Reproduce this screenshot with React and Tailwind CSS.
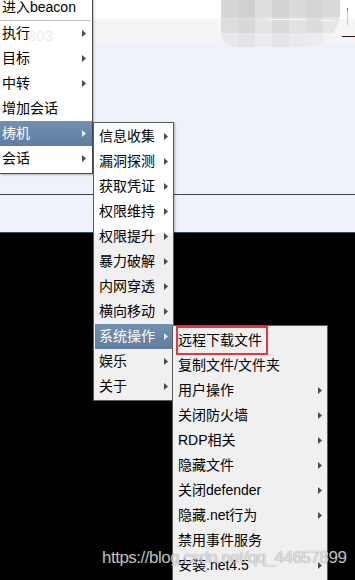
import React from 'react'

const font = { fontFamily: '"Liberation Sans", "Noto Sans CJK SC", sans-serif' }

// small right-pointing triangle used for submenu arrows
const Arrow = ({ light }) => (
    <svg width="4" height="7" viewBox="0 0 4 7" className="shrink-0">
        <polygon points="0,0 4,3.5 0,7" fill={light ? '#e8edf3' : '#4a4a4a'} />
    </svg>
)

const Item = ({ label, arrow, active, pad }) => (
    <div
        className={`h-[25px] leading-[25px] flex items-center justify-between text-[14px] whitespace-nowrap ${pad} ${
            active ? 'bg-[linear-gradient(to_bottom,#7290b0,#5f7d9e)] text-white' : 'text-black'
        }`}
    >
        <span>{label}</span>
        {arrow && <Arrow light={active} />}
    </div>
)

const mainItems = [
    { label: '执行', arrow: true },
    { label: '目标', arrow: true },
    { label: '中转', arrow: true },
    { label: '增加会话' },
    { label: '梼机', arrow: true, active: true },
    { label: '会话', arrow: true },
]

const subItems = [
    '信息收集', '漏洞探测', '获取凭证', '权限维持', '权限提升', '暴力破解',
    '内网穿透', '横向移动', '系统操作', '娱乐', '关于',
]

const sysItems = [
    { label: '远程下载文件' },
    { label: '复制文件/文件夹' },
    { label: '用户操作', arrow: true },
    { label: '关闭防火墙', arrow: true },
    { label: 'RDP相关', arrow: true },
    { label: '隐藏文件', arrow: true },
    { label: '关闭defender', arrow: true },
    { label: '隐藏.net行为', arrow: true },
    { label: '禁用事件服务' },
    { label: '安装.net4.5', arrow: true },
]

const mosaic = [
    ['#d6d6d6', '#d0d0d0', '#dedede', '#d2d2d2', '#dadada', '#d4d4d4', '#d9d9d9'],
    ['#dddddd', '#d8d8d8', '#e4e4e4', '#dadada', '#e2e2e2', '#dcdcdc', '#e6e6e6'],
    ['#e8e8ec', '#e3e3e8', '#ebebef', '#e4e4ea', '#e9e9ee', '#ececf0', '#eff2fa'],
]

export default function App() {
    return (
        <div className="relative w-[355px] h-[580px] overflow-hidden bg-black" style={font}>
            {/* backdrop */}
            <div className="flex flex-col">
                <div className="h-[19px] bg-white" />
                <div className="h-[23px] bg-[#f5f5f5]" />
                <div className="h-[152px] bg-[#eff2fa]" />
                <div className="h-px bg-[#444]" />
                <div className="h-[37px] bg-[#eff2fa]" />
                <div className="h-px bg-[#2f4d6c]" />
            </div>

            {/* blurred mosaic */}
            <div className="absolute left-[221px] top-0 w-[119px] h-[47px] rounded-bl-[14px] rounded-br-[34px] overflow-hidden grid grid-cols-7 grid-rows-[17px_16px_14px]">
                {mosaic.flat().map((c, i) => (
                    <div key={i} style={{ background: c }} />
                ))}
            </div>
            <div className="absolute left-[267px] top-[19px] w-[40px] h-px bg-white/80" />
            <div className="absolute left-[320px] top-[20px] w-[14px] h-px bg-white/80" />

            {/* right edge fragments */}
            <div className="absolute left-[347px] top-[8px] w-px h-[17px] bg-[#c8c8c8]" />
            <div className="absolute left-[347px] top-[8px] w-px h-[2px] bg-[#2a7ad0]" />
            <div className="absolute left-[342px] top-[36px] w-[13px] h-px bg-[#3a1010]" />

            {/* main menu */}
            <div className="absolute left-0 top-[-5px] w-[93px] bg-white border-r border-b border-[#4a4a4a] pb-[2px] shadow-[1px_1px_2px_rgba(0,0,0,0.25)]">
                <Item label="进入beacon" pad="pl-[2px] pr-[6px]" />
                <div className="h-px bg-[#bdbdbd] mr-[2px]" />
                {mainItems.map((it) => (
                    <Item key={it.label} {...it} pad="pl-[2px] pr-[6px]" />
                ))}
                <div className="absolute left-[28px] top-[30px] text-[15px] text-[#ececec] pointer-events-none">303</div>
            </div>

            {/* second level */}
            <div className="absolute left-[93px] top-[122px] w-[81px] border border-[#5a5a5a] py-[1px] px-[1px] bg-[linear-gradient(to_bottom,#ffffff_110px,#f0f0f0_110px)] shadow-[1px_1px_2px_rgba(0,0,0,0.3)]">
                {subItems.map((s) => (
                    <Item key={s} label={s} arrow active={s === '系统操作'} pad="pl-[4px] pr-[4px]" />
                ))}
            </div>

            {/* third level */}
            <div className="absolute left-[172px] top-[325px] w-[156px] h-[270px] border border-[#5a5a5a] pt-[2px] bg-[#f0f0f0]">
                {sysItems.map((it, i) => (
                    <div key={it.label} className="relative">
                        <Item {...it} pad="pl-[5px] pr-[5px]" />
                        {i === 0 && (
                            <div className="absolute left-[3px] top-[-2px] w-[92px] h-[29px] border-2 border-[#e8363a]" />
                        )}
                    </div>
                ))}
            </div>

            {/* watermark */}
            <div className="absolute left-[102px] top-[548px] text-[17px] leading-[20px] tracking-[-0.5px] text-white/75 [text-shadow:0_0_1px_rgba(0,0,0,0.55)] pointer-events-none whitespace-nowrap">
                https://blog.csdn.net/qq_44657899
            </div>
        </div>
    )
}
